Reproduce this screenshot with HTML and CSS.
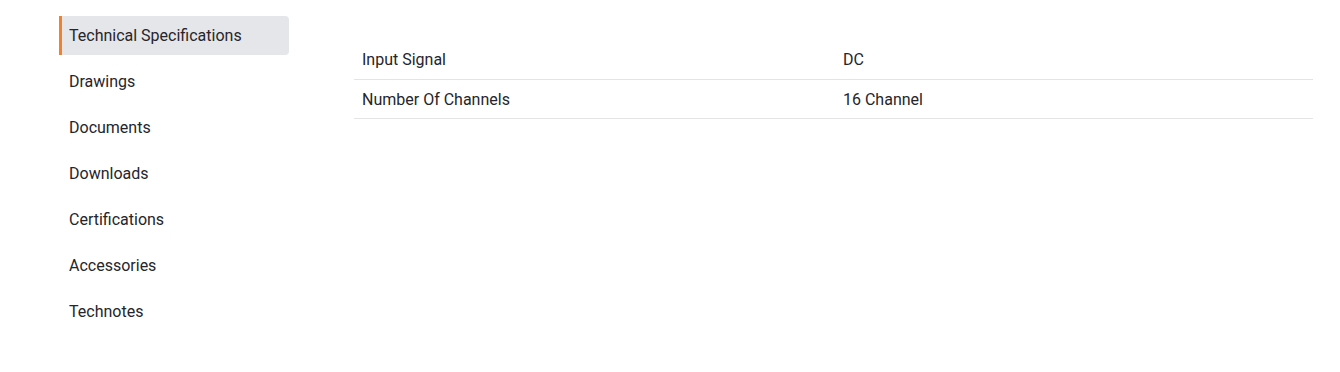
FILE: index.html
```html
<!DOCTYPE html>
<html lang="en">
<head>
  <meta charset="UTF-8" />
  <meta name="viewport" content="width=device-width, initial-scale=1.0" />
  <title>Product Details</title>
  <link rel="stylesheet" href="styles.css">
</head>
<body>
  <div class="product-tabs">
    <!-- Tab navigation -->
    <ul class="tab-nav">
      <li class="tab-item active">Technical Specifications</li>
      <li class="tab-item">Drawings</li>
      <li class="tab-item">Documents</li>
      <li class="tab-item">Downloads</li>
      <li class="tab-item">Certifications</li>
      <li class="tab-item">Accessories</li>
      <li class="tab-item">Technotes</li>
    </ul>
    <!-- Spec table -->
    <div class="tab-content">
      <table class="spec-table">
        <tr>
          <td>Input Signal</td>
          <td>DC</td>
        </tr>
        <tr>
          <td>Number Of Channels</td>
          <td>16 Channel</td>
        </tr>
      </table>
    </div>
  </div>
</body>
</html>
```

FILE: styles.css
```css
:root {
  --text-color: #25252b;
  --accent-color: #f0822d;
  --active-bg: #e5e6ea;
  --border-color: #e4e4e4;
}
body {
  margin: 0;
  font-family: Roboto, "Noto Sans", sans-serif;
  font-size: 16px;
  color: var(--text-color);
  background: #fff;
}
.product-tabs {
  display: flex;
  gap: 65px;
  padding: 16px 27px 0 59px;
}
.tab-nav {
  list-style: none;
  margin: 0;
  padding: 0;
  width: 230px;
  flex-shrink: 0;
  display: flex;
  flex-direction: column;
  gap: 7px;
}
.tab-item {
  height: 39px;
  line-height: 40px;
  padding-left: 7px;
  border-left: 3px solid transparent;
  border-radius: 0 4px 4px 0;
  box-sizing: border-box;
  cursor: pointer;
}
.tab-item.active {
  background-color: var(--active-bg);
  border-left-color: var(--accent-color);
}
.tab-content {
  flex: 1;
  padding-top: 24px;
}
.spec-table {
  width: 100%;
  border-collapse: collapse;
}
.spec-table td {
  height: 39px;
  padding: 1px 8px 0;
  border-bottom: 1px solid var(--border-color);
  box-sizing: border-box;
}
.spec-table td:first-child {
  width: 481px;
}
```
